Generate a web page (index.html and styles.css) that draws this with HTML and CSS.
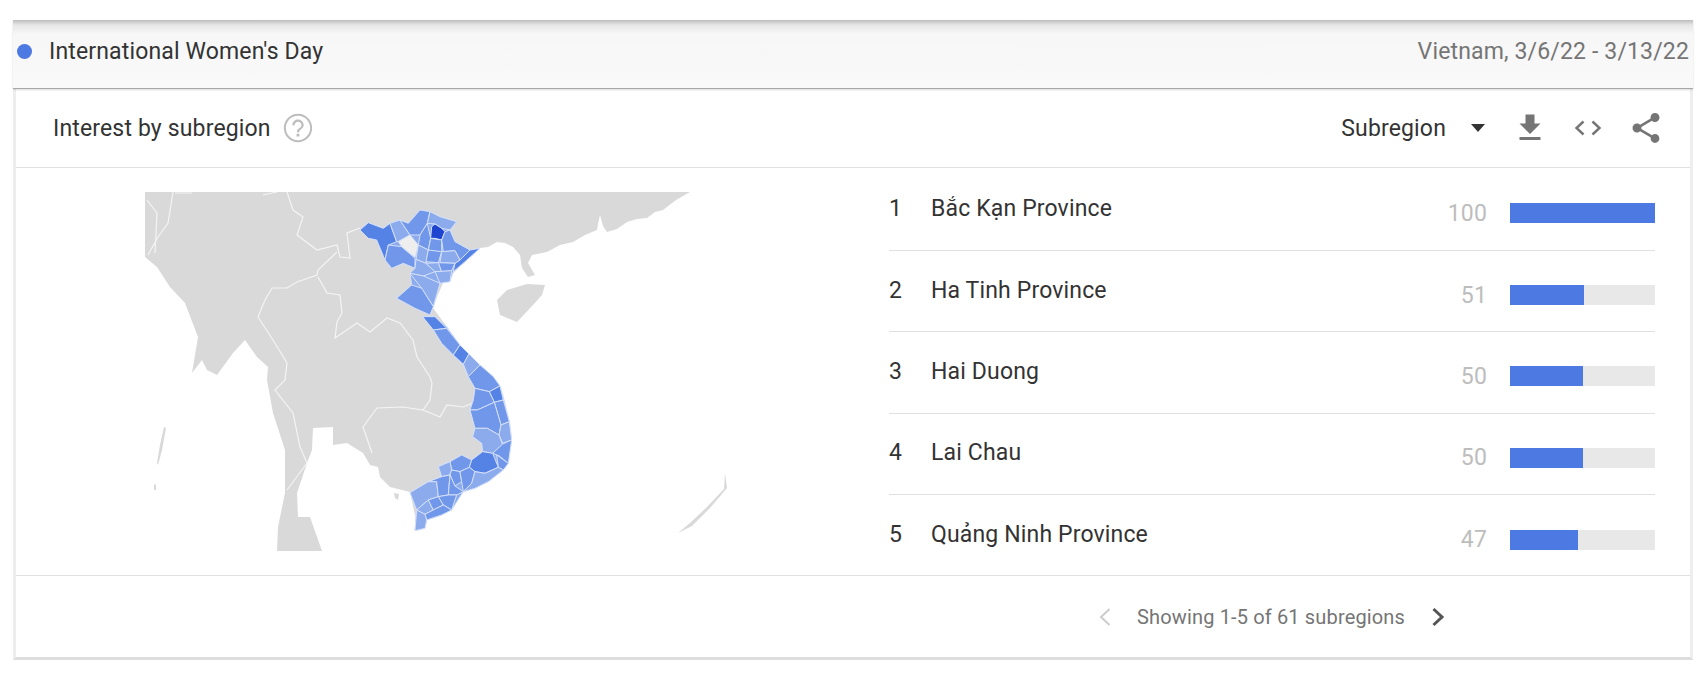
FILE: index.html
```html
<!DOCTYPE html>
<html lang="en">
<head>
  <meta charset="UTF-8" />
  <title>Interest by subregion</title>
  <link rel="stylesheet" href="styles.css">
</head>
<body>
  <div class="legend">
    <div class="legend-term"><span class="dot"></span>International Women's Day</div>
    <div class="legend-range">Vietnam, 3/6/22 - 3/13/22</div>
  </div>

  <div class="card">
    <div class="card-head">
      <div class="card-title">
        Interest by subregion
        <svg class="help" viewBox="0 0 24 24"><path d="M11 18h2v-2h-2v2zm1-16C6.48 2 2 6.48 2 12s4.48 10 10 10 10-4.48 10-10S17.52 2 12 2zm0 18.6c-4.7 0-8.6-3.9-8.6-8.6S7.3 3.4 12 3.4s8.6 3.9 8.6 8.6-3.9 8.6-8.6 8.6zM12 6c-2.21 0-4 1.79-4 4h1.6c0-1.3 1.1-2.4 2.4-2.4s2.4 1.1 2.4 2.4c0 2.2-3.2 2-3.2 5h1.6c0-2.2 3.2-2.5 3.2-5 0-2.21-1.79-4-4-4z"/></svg>
      </div>
      <div class="card-tools">
        <div class="picker">Subregion<span class="caret"></span></div>
        <svg class="tool" viewBox="0 0 24 24"><path d="M19 9h-4V3H9v6H5l7 7 7-7zM5 18v2h14v-2H5z"/></svg>
        <svg class="tool" viewBox="0 0 36 36"><path class="code" d="M13.5 11.5 6.5 18l7 6.500M22.500 11.500l7 6.500-7 6.500"/></svg>
        <svg class="tool" viewBox="0 0 24 24"><path d="M18 16.080c-.76 0-1.440.3-1.960.77L8.910 12.700c.05-.23.09-.46.09-.7s-.04-.47-.09-.7l7.050-4.110c.54.5 1.250.81 2.040.81 1.660 0 3-1.340 3-3s-1.340-3-3-3-3 1.340-3 3c0 .24.04.47.09.7L8.040 9.810C7.500 9.310 6.790 9 6 9c-1.660 0-3 1.340-3 3s1.340 3 3 3c.79 0 1.500-.31 2.040-.81l7.120 4.160c-.05.21-.08.43-.08.65 0 1.610 1.310 2.920 2.920 2.920 1.610 0 2.920-1.310 2.920-2.920s-1.310-2.920-2.920-2.920z"/></svg>
      </div>
    </div>

    <div class="card-body">
      <div class="map-box">
        <svg class="map" viewBox="130 180 620 380">
          <!-- land -->
          <path class="land" d="M145 192H690L676 200 663 210 655 212 647 218 637 219 627 222 617 229 607 232 603 226 600 215 598 224 597 230 585 235 573 242 560 245 547 252 532 255 528 263 535 275 528 277 522 268 520 255 513 247 505 243 497 242 488 247 480 248 467 260 443 283 437 297 433 308 447 327 455 345 475 367 490 383 500 400 505 437 500 465 490 470 470 487 453 498 437 512 417 525 410 492 390 487 380 477 378 467 370 465 363 453 347 443 333 445 333 427 313 428 312 450 307 463 297 493 298 517 310 517 322 551H277L278 527 285 493 285 450 273 413 267 380 268 367 257 357 245 340 233 353 217 375 207 370 202 360 192 373 198 337 185 303 170 287 157 267 145 257Z"/>
          <path class="land" d="M497 300 507 290 527 284 545 285 542 295 533 305 517 322 500 315Z"/>
          <path class="land" d="M678 533 690 523 707 507 724 489 725 473 727 488 710 508 692 526Z"/>
          <path class="land" d="M164 427 166 428 162 450 158 465 157 463 160 445ZM154 485 156 484 156 490 154 490Z"/>
          <path class="land" d="M394 493 399 494 398 500 395 498Z"/>
          <!-- country borders -->
          <g class="borders">
            <path d="M287 192 293 210 303 217 297 235 317 250 337 245 340 257 350 258 347 233 360 228"/>
            <path d="M337 252 318 270 317 275 297 282 287 288 272 288 265 300 258 317 273 340 287 363 285 380 275 390 293 413 300 447 307 463 287 490"/>
            <path d="M318 277 327 293 340 295 342 313 337 322 335 338 357 323 370 332 387 318 400 323 413 340 417 357 430 377 432 383 430 400 423 410 403 407 377 408 363 427 372 453"/>
            <path d="M423 410 440 417 447 405 463 407 473 403"/>
            <path d="M173 192 168 223 158 237 148 255M147 200 157 213 155 253M175 193 192 193M263 195 277 192"/>
          </g>
          <!-- northern provinces -->
          <g class="prov" transform="translate(340 200) scale(.3333)">
            <path class="c0" d="M60 90 85 68 130 85 150 70 180 60 205 70 240 30 270 35 300 50 350 65 330 90 345 125 390 150 420 145 375 185 340 215 330 245 300 250 280 320 270 345 225 325 170 295 215 255 210 220 225 205 190 190 155 205 135 180 110 120 85 115Z"/>
            <path class="c2" d="M60 90 85 68 130 85 150 70 170 125 145 135 135 180 110 120 85 115Z"/>
            <path class="c1" d="M145 135 185 140 225 175 225 205 190 190 155 205 135 180Z"/>
            <path class="c0" d="M150 70 180 60 210 105 175 125 170 125Z"/>
            <path class="hole" d="M175 125 210 105 235 135 225 172 185 140Z"/>
            <path class="c1" d="M205 70 240 30 270 35 262 70 240 105 210 105 180 60Z"/>
            <path class="c0" d="M270 35 300 50 350 65 330 90 305 85 285 72 262 70Z"/>
            <path class="c1" d="M240 105 262 70 272 115 265 150 235 135Z"/>
            <path class="c3" d="M275 80 285 72 305 85 315 95 305 120 285 115 272 115Z"/>
            <path class="c1" d="M272 115 305 120 305 155 280 155 265 150Z"/>
            <path class="c1" d="M315 95 330 90 345 125 390 150 360 180 345 152 310 155 305 120Z"/>
            <path class="c2" d="M360 180 390 150 420 145 375 185 340 215 345 190Z"/>
            <path class="c0" d="M235 135 265 150 258 190 228 178Z"/>
            <path class="c1" d="M265 150 305 155 295 188 258 185Z"/>
            <path class="c0" d="M305 155 345 152 360 180 345 190 300 188Z"/>
            <path class="c0" d="M228 178 258 190 285 215 250 228 210 220 225 205Z"/>
            <path class="c0" d="M258 190 295 188 305 215 285 215Z"/>
            <path class="c1" d="M295 188 345 190 335 212 305 215Z"/>
            <path class="c0" d="M285 215 335 212 330 245 300 250Z"/>
            <path class="c0" d="M210 220 250 228 300 250 280 320 245 265Z"/>
            <path class="c1" d="M170 295 215 255 245 265 280 320 270 345 225 325Z"/>
          </g>
          <!-- central and southern provinces -->
          <g class="prov" transform="translate(400 180) scale(.3333)">
            <path class="c0" d="M68 410 100 450 125 490 160 525 190 555 205 590 225 625 220 660 210 690 225 745 218 770 245 790 248 815 215 840 185 825 150 845 115 860 125 890 85 905 30 938 50 990 45 1052 75 1045 80 1020 125 1005 155 990 190 935 225 925 265 905 310 870 325 850 335 780 328 725 310 650 300 618 280 590 240 555 205 520 180 495 140 440 105 410Z"/>
            <path class="c2" d="M68 410 105 410 140 445 100 450Z"/>
            <path class="c1" d="M100 450 140 445 180 495 160 525 125 490Z"/>
            <path class="c2" d="M160 525 180 495 207 522 190 553Z"/>
            <path class="c0" d="M190 553 207 522 240 555 205 590Z"/>
            <path class="c1" d="M205 590 240 555 280 590 300 618 268 635 225 625Z"/>
            <path class="c2" d="M268 635 300 618 310 660 283 667Z"/>
            <path class="c1" d="M225 625 268 635 283 667 232 690 210 690 220 660Z"/>
            <path class="c1" d="M283 667 310 660 328 725 303 735Z"/>
            <path class="c1" d="M210 690 232 690 283 667 303 735 297 765 262 745 225 745Z"/>
            <path class="c0" d="M303 735 328 725 335 780 308 790 297 765Z"/>
            <path class="c0" d="M225 745 262 745 297 765 308 795 278 820 248 815 245 790 218 770Z"/>
            <path class="c1" d="M308 792 335 780 325 850 298 828 278 820Z"/>
            <path class="c1" d="M290 825 325 850 310 870 295 862Z"/>
            <path class="c1" d="M150 845 185 825 215 840 208 862 180 875 155 870Z"/>
            <path class="c2" d="M215 840 248 815 278 820 295 862 255 880 225 875 208 862Z"/>
            <path class="c0" d="M115 860 150 845 155 870 150 885 125 890Z"/>
            <path class="c1" d="M155 870 180 875 185 905 165 918 150 885Z"/>
            <path class="c1" d="M180 875 208 862 225 875 215 910 190 935 185 905Z"/>
            <path class="c0" d="M225 875 255 880 295 862 310 870 265 905 225 925 190 935 215 910Z"/>
            <path class="c0" d="M30 938 85 905 110 905 115 950 85 960 50 990Z"/>
            <path class="c1" d="M85 905 125 890 150 885 145 945 115 950 110 905Z"/>
            <path class="c1" d="M150 885 165 918 190 935 170 945 145 945Z"/>
            <path class="c0" d="M50 990 85 960 100 990 75 1003Z"/>
            <path class="c1" d="M85 960 115 950 130 975 100 990Z"/>
            <path class="c1" d="M115 950 145 945 170 945 155 990 130 975Z"/>
            <path class="c1" d="M75 1003 100 990 130 975 155 990 125 1005 80 1020Z"/>
            <path class="c0" d="M50 990 75 1003 80 1020 75 1045 45 1052Z"/>
          </g>
        </svg>
      </div>

      <div class="rows">
        <div class="row">
          <div class="row-name"><span class="rank">1</span>Bắc Kạn Province</div>
          <div class="row-stat"><span class="num">100</span><div class="track"><div class="fill" style="width:100%"></div></div></div>
        </div>
        <div class="row">
          <div class="row-name"><span class="rank">2</span>Ha Tinh Province</div>
          <div class="row-stat"><span class="num">51</span><div class="track"><div class="fill" style="width:51%"></div></div></div>
        </div>
        <div class="row">
          <div class="row-name"><span class="rank">3</span>Hai Duong</div>
          <div class="row-stat"><span class="num">50</span><div class="track"><div class="fill" style="width:50%"></div></div></div>
        </div>
        <div class="row">
          <div class="row-name"><span class="rank">4</span>Lai Chau</div>
          <div class="row-stat"><span class="num">50</span><div class="track"><div class="fill" style="width:50%"></div></div></div>
        </div>
        <div class="row">
          <div class="row-name"><span class="rank">5</span>Quảng Ninh Province</div>
          <div class="row-stat"><span class="num">47</span><div class="track"><div class="fill" style="width:47%"></div></div></div>
        </div>
      </div>
    </div>

    <div class="card-foot">
      <svg class="pager pager-off" viewBox="0 0 14 20"><path d="M11.500 2 3 10l8.500 8"/></svg>
      <span class="foot-text">Showing 1-5 of 61 subregions</span>
      <svg class="pager" viewBox="0 0 14 20"><path d="M2.500 2 11 10l-8.500 8"/></svg>
    </div>
  </div>
</body>
</html>
```

FILE: styles.css
```css
body {
  font-family: 'Roboto', 'Liberation Sans', sans-serif;
  background: #fff;
  margin: 0;
  padding: 20px 5px 0 13px;
  color: #333;
  font-size: 23px;
  letter-spacing: 0.15px;
}
.legend {
  height: 62px;
  display: flex;
  justify-content: space-between;
  align-items: center;
  padding: 0 4px 6px 4px;
  background: linear-gradient(to bottom, #bdbdbd 0, #e6e6e6 5px, #f7f7f7 14px, #f9f9f9 100%);
  border-bottom: 1px solid #a8a8a8;
  box-shadow: 0 1px 2px rgba(0,0,0,0.15);
  position: relative;
}
.legend-term {
  display: flex;
  align-items: center;
}
.dot {
  width: 15px;
  height: 15px;
  border-radius: 50%;
  background: #4d79e2;
  margin-right: 17px;
}
.legend-range {
  color: #757575;
}
.card {
  border-left: 3px solid #eee;
  border-right: 3px solid #eee;
  border-bottom: 3px solid #ddd;
  background: #fff;
}
.card-head {
  height: 78px;
  display: flex;
  justify-content: space-between;
  align-items: center;
  padding: 0 26px 0 37px;
  border-bottom: 1px solid #e0e0e0;
}
.card-title {
  display: flex;
  align-items: center;
}
.help {
  width: 34px;
  height: 34px;
  margin-left: 10px;
  fill: #bdbdbd;
}
.card-tools {
  display: flex;
  align-items: center;
  gap: 22px;
}
.picker {
  display: flex;
  align-items: center;
  margin-right: 5px;
}
.caret {
  width: 0;
  height: 0;
  border-left: 7px solid transparent;
  border-right: 7px solid transparent;
  border-top: 8px solid #333;
  margin-left: 25px;
}
.tool {
  width: 36px;
  height: 36px;
  fill: #757575;
}
.code {
  fill: none;
  stroke: #757575;
  stroke-width: 2.4;
}
.card-body {
  display: flex;
  justify-content: space-between;
  padding-right: 35px;
  height: 407px;
}
.map-box {
  padding: 12px 0 0 114px;
}
.map {
  display: block;
  width: 620px;
  height: 380px;
  filter: blur(0.5px);
}
.land {
  fill: #d9d9d9;
}
.borders path {
  fill: none;
  stroke: #f4f4f4;
  stroke-width: 1.2;
}
.prov path {
  stroke: #d5e0f8;
  stroke-width: 3;
  stroke-linejoin: round;
}
.c0 { fill: #8cabed; }
.c1 { fill: #7097e9; }
.c2 { fill: #5582e5; }
.c3 { fill: #1f45d0; }
.hole { fill: #eeeeee; }
.rows {
  width: 766px;
}
.row {
  height: 81.3px;
  box-sizing: border-box;
  display: flex;
  justify-content: space-between;
  align-items: center;
  border-bottom: 1px solid #e0e0e0;
}
.row:first-child {
  height: 83px;
}
.row:last-child {
  border-bottom: none;
}
.row-name {
  display: flex;
  padding-bottom: 2px;
}
.rank {
  width: 42px;
}
.row-stat {
  display: flex;
  align-items: center;
  padding-top: 8px;
}
.num {
  color: #bdbdbd;
  margin-right: 23px;
}
.track {
  width: 145px;
  height: 20px;
  background: #e8e8e8;
}
.fill {
  height: 100%;
  background: #4d79e2;
}
.card-foot {
  height: 81px;
  border-top: 1px solid #e0e0e0;
  display: flex;
  justify-content: flex-end;
  align-items: center;
  padding-right: 245px;
  font-size: 20px;
  color: #757575;
}
.foot-text {
  margin: 0 26px 0 25px;
}
.pager {
  width: 14px;
  height: 20px;
  fill: none;
  stroke: #555;
  stroke-width: 3;
}
.pager-off {
  stroke: #ccc;
  stroke-width: 2;
}
```
